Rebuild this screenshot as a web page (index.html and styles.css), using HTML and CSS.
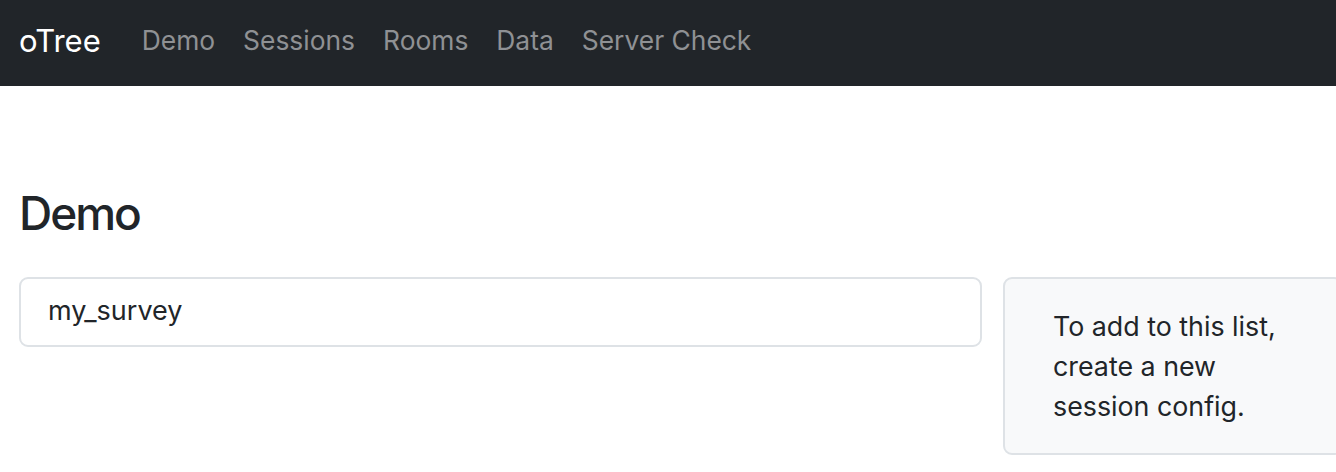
FILE: index.html
```html
<!DOCTYPE html>
<html lang="en">
<head>
<meta charset="utf-8">
<title>oTree Demo</title>
<link rel="stylesheet" href="styles.css">
</head>
<body>
<nav class="navbar">
  <a class="brand" href="#">oTree</a>
  <ul class="nav">
    <li><a href="#">Demo</a></li>
    <li><a href="#">Sessions</a></li>
    <li><a href="#">Rooms</a></li>
    <li><a href="#">Data</a></li>
    <li><a href="#">Server Check</a></li>
  </ul>
</nav>
<main class="page">
  <h2 class="title">Demo</h2>
  <div class="row">
    <div class="list">
      <a class="list-item" href="#">my_survey</a>
    </div>
    <div class="note">To add to this list, create a new session config.</div>
  </div>
</main>
</body>
</html>
```

FILE: styles.css
```css
html, body {
  margin: 0;
  padding: 0;
  overflow: hidden;
}
body {
  font-family: Inter, "Noto Sans", "Liberation Sans", sans-serif;
  color: #212529;
  background: #fff;
  width: 1336px;
}
a { text-decoration: none; }

.navbar {
  height: 86px;
  background: #212529;
  display: flex;
  align-items: center;
  padding: 0 19px 6px;
  box-sizing: border-box;
}
.brand {
  color: #fff;
  font-size: 31px;
  line-height: 45px;
  margin-right: 41px;
}
.nav {
  display: flex;
  list-style: none;
  margin: 0;
  padding: 0;
  gap: 28px;
}
.nav a {
  color: #8f9194;
  font-size: 26.4px;
  line-height: 36px;
}

.page {
  padding: 99px 0 0 19px;
}
.title {
  margin: 0 0 34px;
  font-size: 46px;
  font-weight: 500;
  letter-spacing: -2px;
  line-height: 57.6px;
}
.row {
  display: flex;
  align-items: flex-start;
  gap: 21px;
}
.list {
  width: 963px;
  flex: none;
}
.list-item {
  display: flex;
  align-items: center;
  height: 70px;
  box-sizing: border-box;
  padding: 0 27px 2px;
  border: 2px solid #dee2e6;
  border-radius: 9px;
  color: #212529;
  font-size: 27px;
}
.note {
  flex: none;
  width: 340px;
  box-sizing: border-box;
  padding: 27px 48px 27px 48px;
  background: #f8f9fa;
  border: 2px solid #dee2e6;
  border-radius: 9px;
  font-size: 26.8px;
  line-height: 40px;
}
```
